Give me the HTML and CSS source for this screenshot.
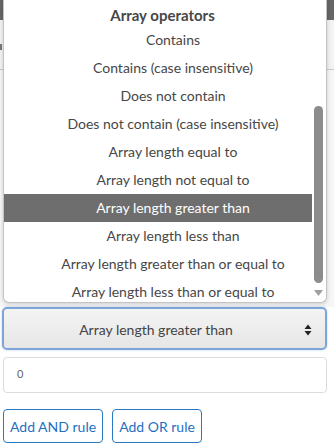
FILE: index.html
```html
<!DOCTYPE html>
<html>
<head>
<meta charset="utf-8">
<link rel="stylesheet" href="styles.css">
</head>
<body>
<div class="page">
  <div class="backdrop">
    <div class="topbar"></div>
    <div class="band">
      <span class="peek"></span>
    </div>
    <div class="rest"></div>
  </div>
  <div class="form">
    <div class="select">
      <span class="select-text">Array length greater than</span>
      <svg class="select-arrows" width="8" height="12" viewBox="0 0 8 12"><path d="M4 0.5 L7.5 5 L0.5 5 Z M4 11.5 L7.5 7 L0.5 7 Z" fill="#222"/></svg>
    </div>
    <div class="input">0</div>
    <div class="buttons">
      <button class="btn">Add AND rule</button>
      <button class="btn">Add OR rule</button>
    </div>
  </div>
  <div class="dropdown">
    <div class="group-label">Array operators</div>
    <div class="opt">Contains</div>
    <div class="opt">Contains (case insensitive)</div>
    <div class="opt">Does not contain</div>
    <div class="opt">Does not contain (case insensitive)</div>
    <div class="opt">Array length equal to</div>
    <div class="opt">Array length not equal to</div>
    <div class="opt selected">Array length greater than</div>
    <div class="opt">Array length less than</div>
    <div class="opt">Array length greater than or equal to</div>
    <div class="opt">Array length less than or equal to</div>
    <div class="scroll-thumb"></div>
    <svg class="scroll-down" width="9" height="6" viewBox="0 0 9 6"><path d="M0 0 L9 0 L4.5 6 Z" fill="#a0a0a0"/></svg>
  </div>
</div>
</body>
</html>
```
FILE: styles.css
```css
html, body {
  margin: 0;
  padding: 0;
  background: #ffffff;
}
body {
  width: 334px;
  height: 447px;
  overflow: hidden;
  font-family: Lato, "Open Sans", sans-serif;
}
.page {
  position: relative;
  width: 334px;
  height: 447px;
}
.backdrop {
  height: 307px;
  display: flex;
  flex-direction: column;
}
.topbar {
  height: 20px;
  background: #666666;
}
.band {
  height: 49px;
  background: #f3f3f3;
  border-bottom: 1px solid #c9c9c9;
  position: relative;
}
.peek {
  position: absolute;
  left: 0;
  top: 24px;
  width: 2px;
  height: 6px;
  background: #777;
}
.rest {
  flex: 1;
  background: #f6f6f6;
}
.form {
  padding: 0 7px 0 2px;
  display: flex;
  flex-direction: column;
}
.select {
  height: 39px;
  width: 321px;
  border: 2px solid #7ea5da;
  border-radius: 5px;
  background: linear-gradient(#f4f4f4, #e6e6e6);
  display: flex;
  align-items: center;
  position: relative;
  box-shadow: 0 0 2px rgba(90, 140, 210, 0.5);
}
.select-text {
  flex: 1;
  text-align: center;
  padding-right: 17px;
  font-size: 14px;
  color: #444;
  padding-top: 1px;
}
.select-arrows {
  position: absolute;
  right: 13px;
  top: 15px;
}
.input {
  margin-top: 7px;
  margin-left: 1px;
  width: 309px;
  height: 34px;
  border: 1px solid #dcdcdc;
  border-radius: 4px;
  padding-left: 13px;
  font-size: 11px;
  line-height: 32px;
  color: #666;
  box-sizing: content-box;
}
.buttons {
  margin-top: 16px;
  margin-left: 1px;
  display: flex;
  gap: 9px;
}
.btn {
  height: 34px;
  padding: 0 6px;
  border: 1px solid #2a78c2;
  border-radius: 4px;
  background: #fff;
  color: #1f70bf;
  font-family: Lato, "Open Sans", sans-serif;
  font-size: 14px;
}
.dropdown {
  position: absolute;
  left: 3px;
  top: 0;
  width: 322px;
  height: 302px;
  background: #fff;
  border: 1px solid #c4c4c4;
  border-top: none;
  border-radius: 0 0 6px 6px;
  box-shadow: 0 1px 4px rgba(0, 0, 0, 0.18);
  overflow: hidden;
  color: #474747;
  font-size: 14px;
}
.group-label {
  height: 22px;
  line-height: 22px;
  padding-top: 4px;
  padding-left: 9px;
  width: 299px;
  text-align: center;
  font-weight: bold;
  font-size: 15px;
}
.opt {
  height: 28px;
  line-height: 28px;
  width: 278px;
  padding-left: 30px;
  text-align: center;
  white-space: nowrap;
}
.opt.selected {
  background: #6e6e6e;
  color: #fff;
}
.scroll-thumb {
  position: absolute;
  left: 310px;
  top: 106px;
  width: 9px;
  height: 177px;
  border-radius: 5px;
  background: #8c8c8c;
}
.scroll-down {
  position: absolute;
  left: 310px;
  top: 290px;
}
```
